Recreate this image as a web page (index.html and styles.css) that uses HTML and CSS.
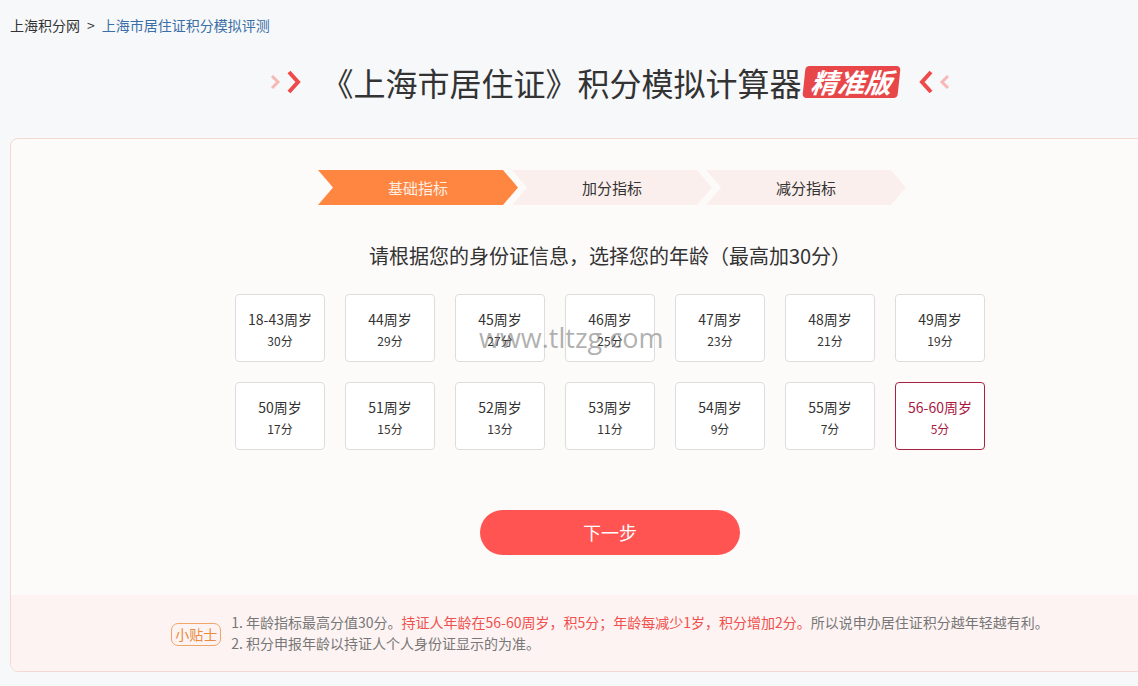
FILE: index.html
```html
<!DOCTYPE html>
<html lang="zh-CN">
<head>
    <meta charset="UTF-8">
    <meta name="viewport" content="width=device-width, initial-scale=1.0">
    <title>上海市居住证积分模拟评测</title>
    <link rel="stylesheet" href="styles.css">
</head>
<body>
    <div class="crumbs">
        <a href="#" class="crumb-home">上海积分网</a>
        <span class="crumb-sep">&gt;</span>
        <a href="#" class="crumb-now">上海市居住证积分模拟评测</a>
    </div>

    <h1 class="title">
        <span class="arrows">
            <svg width="36" height="28" viewBox="0 0 36 28"><path d="M3 8 L9 14 L3 20" fill="none" stroke="#f6b9b7" stroke-width="3"/><path d="M20 4 L29 14 L20 24" fill="none" stroke="#ee4a4a" stroke-width="4"/></svg>
        </span>
        <span class="title-text">《上海市居住证》积分模拟计算器</span>
        <span class="badge">精准版</span>
        <span class="arrows right">
            <svg width="36" height="28" viewBox="0 0 36 28"><path d="M16 4 L7 14 L16 24" fill="none" stroke="#ee4a4a" stroke-width="4"/><path d="M33 8 L27 14 L33 20" fill="none" stroke="#f6b9b7" stroke-width="3"/></svg>
        </span>
    </h1>

    <div class="calc">
        <div class="steps">
            <div class="step active">基础指标</div>
            <div class="step">加分指标</div>
            <div class="step">减分指标</div>
        </div>

        <p class="question">请根据您的身份证信息，选择您的年龄（最高加30分）</p>

        <div class="ages">
            <div class="age"><b>18-43周岁</b><span>30分</span></div>
            <div class="age"><b>44周岁</b><span>29分</span></div>
            <div class="age"><b>45周岁</b><span>27分</span></div>
            <div class="age"><b>46周岁</b><span>25分</span></div>
            <div class="age"><b>47周岁</b><span>23分</span></div>
            <div class="age"><b>48周岁</b><span>21分</span></div>
            <div class="age"><b>49周岁</b><span>19分</span></div>
            <div class="age"><b>50周岁</b><span>17分</span></div>
            <div class="age"><b>51周岁</b><span>15分</span></div>
            <div class="age"><b>52周岁</b><span>13分</span></div>
            <div class="age"><b>53周岁</b><span>11分</span></div>
            <div class="age"><b>54周岁</b><span>9分</span></div>
            <div class="age"><b>55周岁</b><span>7分</span></div>
            <div class="age selected"><b>56-60周岁</b><span>5分</span></div>
        </div>

        <div class="watermark">www.tltzg.com</div>

        <div class="actions">
            <a href="#" class="next-button">下一步</a>
        </div>

        <div class="tips">
            <span class="tips-tag">小贴士</span>
            <div class="tips-text">
                <p>1. 年龄指标最高分值30分。<em>持证人年龄在56-60周岁，积5分；年龄每减少1岁，积分增加2分。</em>所以说申办居住证积分越年轻越有利。</p>
                <p>2. 积分申报年龄以持证人个人身份证显示的为准。</p>
            </div>
        </div>
    </div>
</body>
</html>
```

FILE: styles.css
```css
body {
    margin: 0;
    background: #f7f8fa;
    font-family: "Noto Sans CJK SC", "Noto Sans", sans-serif;
    color: #333;
    overflow: hidden;
}

a {
    text-decoration: none;
}

/* Breadcrumb */
.crumbs {
    padding: 15px 10px 0;
    font-size: 14px;
    line-height: 20px;
    display: flex;
    gap: 7px;
}

.crumb-home { color: #333; }
.crumb-sep { color: #333; }
.crumb-now { color: #3a6ea5; }

/* Title */
.title {
    width: 1200px;
    margin: 22px 0 0 10px;
    height: 50px;
    display: flex;
    justify-content: center;
    align-items: center;
    font-size: 32px;
    font-weight: normal;
    color: #333;
}

.arrows {
    display: flex;
    margin-right: 16px;
}

.arrows.right {
    margin-left: 16px;
    margin-right: 0;
}

.badge {
    position: relative;
    margin-left: 2px;
    padding: 0 7px;
    height: 32px;
    line-height: 32px;
    background: #e8474a;
    color: #fff;
    font-size: 27px;
    font-style: italic;
    font-weight: bold;
    border-radius: 4px;
    transform: skewX(-6deg);
}

/* Calculator card */
.calc {
    position: relative;
    width: 1200px;
    margin: 31px 0 0 10px;
    background: #fdfbfa;
    border: 1px solid #f4d8d2;
    border-radius: 8px;
    padding-top: 31px;
    box-sizing: border-box;
    overflow: hidden;
}

.steps {
    display: flex;
    justify-content: center;
    padding-left: 4px;
}

.step {
    width: 200px;
    height: 35px;
    line-height: 35px;
    text-align: center;
    font-size: 15px;
    color: #333;
    background: #fbefed;
    clip-path: polygon(0 0, 185px 0, 100% 50%, 185px 100%, 0 100%, 15px 50%);
}

.step + .step {
    margin-left: -6px;
}

.step.active {
    background: #ff8640;
    color: #fdeee3;
}

.question {
    margin: 37px 0 0;
    text-align: center;
    font-size: 20px;
    line-height: 28px;
}

.ages {
    width: 750px;
    margin: 24px auto 0;
    display: grid;
    grid-template-columns: repeat(7, 90px);
    gap: 20px;
}

.age {
    height: 68px;
    box-sizing: border-box;
    padding-top: 3px;
    background: #fff;
    border: 1px solid #ddd;
    border-radius: 4px;
    display: flex;
    flex-direction: column;
    align-items: center;
    justify-content: center;
    gap: 2px;
    color: #333;
}

.age b {
    font-weight: normal;
    font-size: 14px;
    line-height: 20px;
}

.age span {
    font-size: 12px;
    line-height: 20px;
}

.age.selected {
    border-color: #a8213f;
    color: #a8173e;
}

.watermark {
    position: absolute;
    left: 468px;
    top: 180px;
    font-family: "Open Sans", sans-serif;
    font-size: 27px;
    color: rgba(110, 110, 110, 0.55);
    pointer-events: none;
}

.actions {
    display: flex;
    justify-content: center;
    margin-top: 60px;
}

.next-button {
    width: 260px;
    height: 45px;
    line-height: 45px;
    text-align: center;
    background: #ff5451;
    color: #fff;
    font-size: 18px;
    border-radius: 23px;
}

/* Tips */
.tips {
    margin-top: 40px;
    background: #fdf3f2;
    padding: 17px 0 17px;
    display: flex;
    justify-content: center;
    align-items: center;
    gap: 10px;
}

.tips-tag {
    height: 23px;
    line-height: 21px;
    padding: 0 3px;
    box-sizing: border-box;
    border: 1px solid #f0a56a;
    border-radius: 7px;
    color: #e98a3e;
    font-size: 14px;
    margin-top: 2px;
}

.tips-text {
    font-size: 14px;
    line-height: 21px;
    color: #777;
}

.tips-text p {
    margin: 0;
}

.tips-text em {
    font-style: normal;
    color: #f0504e;
}
```
